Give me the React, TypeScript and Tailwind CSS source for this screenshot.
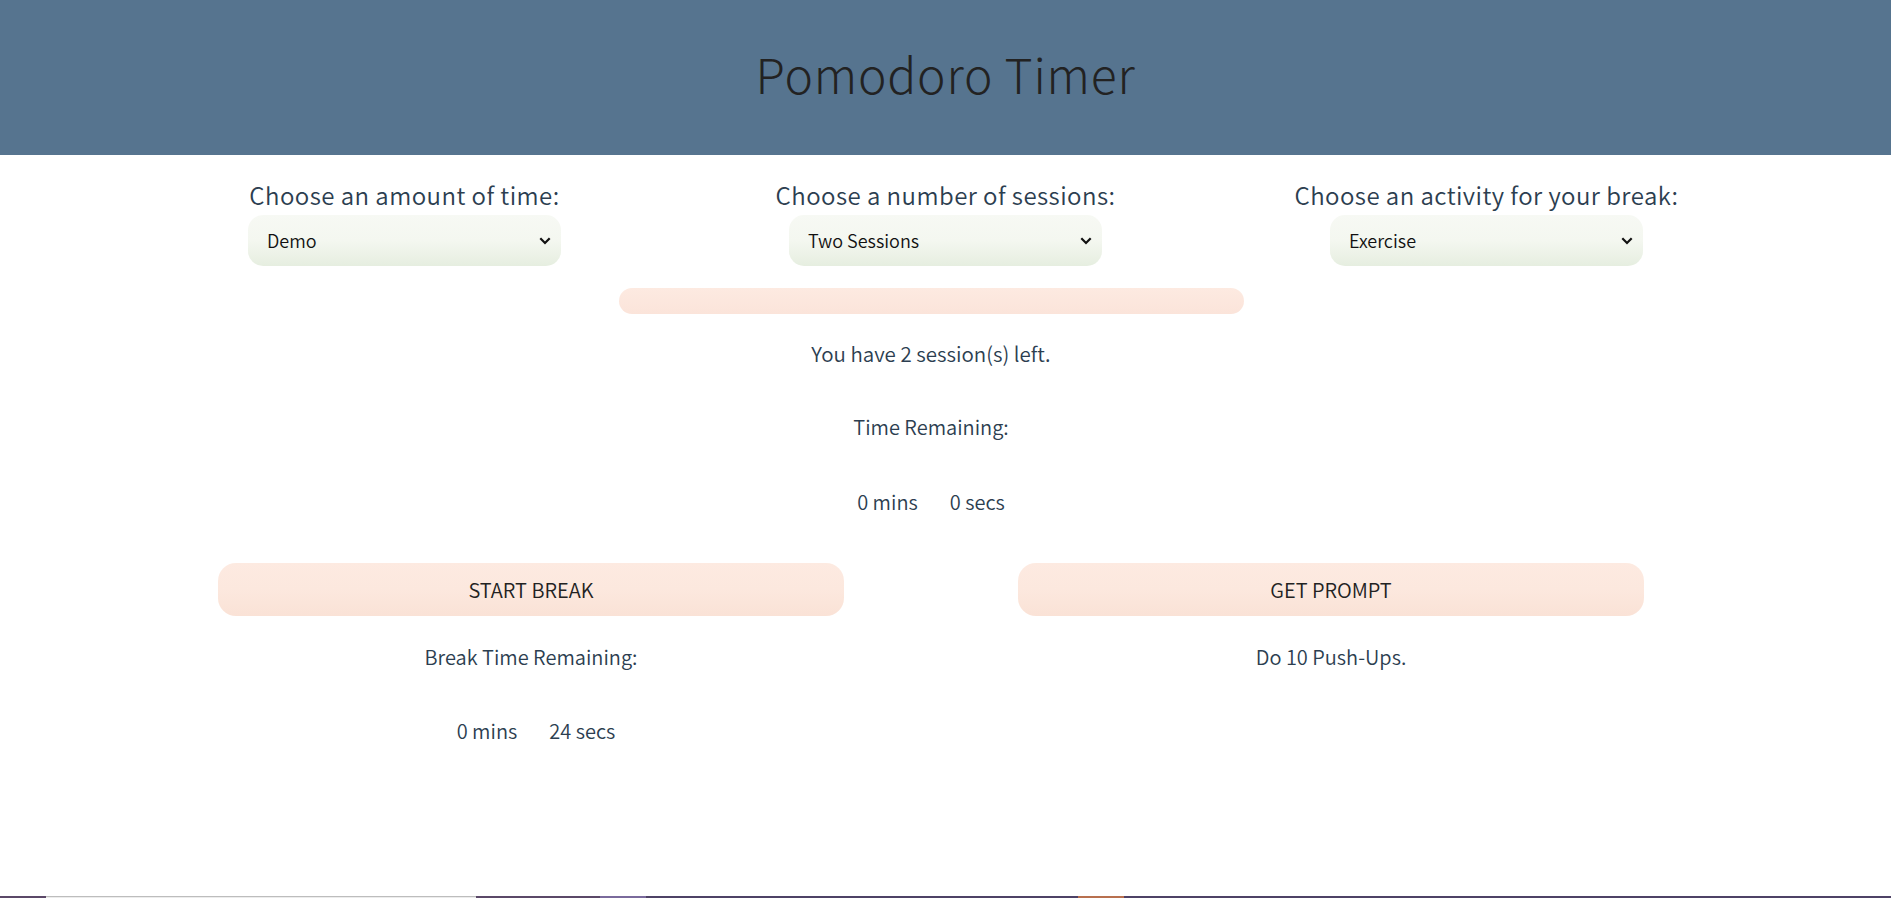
import { useState } from 'react'

const font = { fontFamily: '"Noto Sans CJK JP", "Noto Sans", sans-serif' }

function Chevron() {
    return (
        <svg
            className="pointer-events-none absolute right-[10px] top-1/2 -translate-y-1/2"
            width="12"
            height="8"
            viewBox="0 0 12 8"
            fill="none"
        >
            <path d="M1.3 1.3l4.7 4.7 4.7-4.7" stroke="#111" strokeWidth="2.2" />
        </svg>
    )
}

function Picker({ label, options, value }: { label: string; options: string[]; value: string }) {
    const [current, setCurrent] = useState(value)

    return (
        <div className="flex flex-col items-center">
            <label className="h-[30px] text-[24px] font-[350] leading-[30px] tracking-[0.45px] text-[#2c3e50]">
                {label}
            </label>
            <div className="relative mt-[5px] w-[313px]">
                <select
                    value={current}
                    onChange={(e) => setCurrent(e.target.value)}
                    className="h-[51px] w-full appearance-none rounded-[15px] bg-gradient-to-b from-[#f7f9f4] via-[#f4f7f0] to-[#e6eee0] pl-[19px] text-[18px] font-[350] text-[#111] outline-none"
                    style={font}
                >
                    {options.map((o) => (
                        <option key={o}>{o}</option>
                    ))}
                </select>
                <Chevron />
            </div>
        </div>
    )
}

export default function App() {
    return (
        <div className="flex min-h-screen flex-col bg-white font-[350] text-[#2c3e50]" style={font}>
            {/* Header */}
            <header className="flex h-[155px] items-center justify-center bg-[#56748f] pb-[10px]">
                <h1 className="text-[48px] font-light tracking-[0.8px] text-[#222]">Pomodoro Timer</h1>
            </header>

            {/* Settings */}
            <div className="mx-auto mt-[25px] grid w-[1623px] grid-cols-3">
                <Picker label="Choose an amount of time:" options={['Demo', '25 Minutes', '50 Minutes']} value="Demo" />
                <Picker
                    label="Choose a number of sessions:"
                    options={['One Session', 'Two Sessions', 'Three Sessions', 'Four Sessions']}
                    value="Two Sessions"
                />
                <Picker
                    label="Choose an activity for your break:"
                    options={['Exercise', 'Meditation', 'Stretching']}
                    value="Exercise"
                />
            </div>

            <div className="ml-[131px] flex w-[1600px] flex-col items-center">
                {/* Progress bar */}
                <div className="mt-[22px] h-[26px] w-[625px] rounded-full bg-gradient-to-b from-[#fdeae1] to-[#fbe4da]" />

                <p className="mt-[24px] h-[30px] text-[20.5px] leading-[30px]">You have 2 session(s) left.</p>
                <p className="mt-[44px] h-[30px] text-[20px] leading-[30px]">Time Remaining:</p>
                <div className="mt-[45px] flex h-[30px] gap-[32px] text-[20px] leading-[30px]">
                    <span>0 mins</span>
                    <span>0 secs</span>
                </div>

                {/* Break + prompt */}
                <div className="mt-[46px] grid w-full grid-cols-2">
                    <div className="flex flex-col items-center">
                        <button className="h-[53px] w-[626px] rounded-[18px] bg-gradient-to-b from-[#fdeae1] via-[#fce8de] to-[#fae2d6] text-[20px] text-[#222]">
                            START BREAK
                        </button>
                        <p className="mt-[26px] h-[30px] text-[20px] leading-[30px]">Break Time Remaining:</p>
                        <div className="mt-[44px] flex h-[30px] gap-[32px] pl-[10px] text-[20px] leading-[30px]">
                            <span>0 mins</span>
                            <span>24 secs</span>
                        </div>
                    </div>
                    <div className="flex flex-col items-center">
                        <button className="h-[53px] w-[626px] rounded-[18px] bg-gradient-to-b from-[#fdeae1] via-[#fce8de] to-[#fae2d6] text-[20px] text-[#222]">
                            GET PROMPT
                        </button>
                        <p className="mt-[26px] h-[30px] text-[20px] leading-[30px]">Do 10 Push-Ups.</p>
                    </div>
                </div>
            </div>

            <div className="flex-1" />

            {/* taskbar strip */}
            <div className="flex h-[2px] w-full">
                <div className="w-[46px] bg-[#5b4868]" />
                <div className="w-[430px] border-t border-[#bdbdbd] bg-[#ececec]" />
                <div className="w-[124px] bg-[#5b4868]" />
                <div className="w-[46px] bg-[#7a6a9c]" />
                <div className="w-[432px] bg-[#4e4266]" />
                <div className="w-[46px] bg-[#b8704f]" />
                <div className="flex-1 bg-[#4e4266]" />
            </div>
        </div>
    )
}
